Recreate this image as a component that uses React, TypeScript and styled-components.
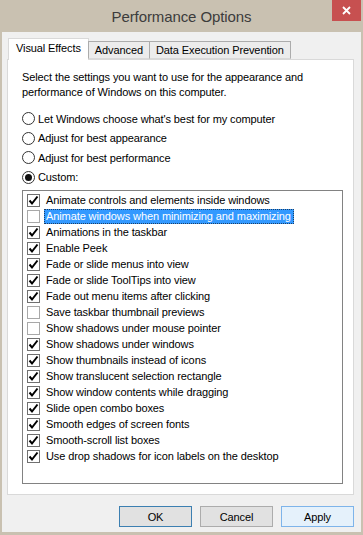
import React from "react";
import styled, { createGlobalStyle } from "styled-components";

const GlobalStyle = createGlobalStyle`
  html, body {
    margin: 0;
    padding: 0;
    background: #c9c1b1;
  }
  body {
    font-family: "Liberation Sans", Arial, sans-serif;
    font-size: 11px;
    letter-spacing: -0.1px;
    color: #000;
  }
`;

const Window = styled.div`
  width: 363px;
  height: 535px;
  display: flex;
  flex-direction: column;
  background: #c9c1b1;
  overflow: hidden;
`;

const TitleBar = styled.div`
  height: 32px;
  display: grid;
  grid-template-columns: 1fr auto 1fr;
  flex-shrink: 0;
`;

const Title = styled.div`
  grid-column: 2;
  align-self: center;
  font-size: 15px;
  letter-spacing: -0.1px;
  color: #3c3c3c;
`;

const CloseButton = styled.div`
  grid-column: 3;
  justify-self: end;
  align-self: start;
  width: 29px;
  height: 21px;
  margin-right: 2px;
  background: #c75050;
  display: flex;
  align-items: center;
  justify-content: center;
`;

const Client = styled.div`
  flex: 1;
  margin: 0 2px 3px;
  background: #f0f0f0;
  display: flex;
  flex-direction: column;
  padding: 6px 7px 0 5px;
`;

const TabStrip = styled.div`
  display: flex;
  align-items: flex-end;
  height: 21px;
  padding-left: 1px;
  position: relative;
  z-index: 1;
`;

const Tab = styled.div<{ $active?: boolean }>`
  box-sizing: border-box;
  height: ${(p) => (p.$active ? "22px" : "18px")};
  margin-bottom: ${(p) => (p.$active ? "-1px" : "0")};
  margin-left: ${(p) => (p.$active ? "0" : "-1px")};
  padding: ${(p) => (p.$active ? "2px 7px 0 7px" : "1px 6px 0 6px")};
  border: 1px solid ${(p) => (p.$active ? "#d9d9d9" : "#acacac")};
  border-bottom: ${(p) => (p.$active ? "none" : "1px solid #d9d9d9")};
  background: ${(p) => (p.$active ? "#ffffff" : "#ececec")};
  white-space: nowrap;
  line-height: 15px;
`;

const Panel = styled.div`
  box-sizing: border-box;
  height: 436px;
  border: 1px solid #d9d9d9;
  background: #fff;
  display: flex;
  flex-direction: column;
  padding: 10px 10px 10px 14px;
`;

const Description = styled.p`
  margin: 0;
  line-height: 15px;
`;

const RadioGroup = styled.div`
  margin-top: 9px;
  display: flex;
  flex-direction: column;
`;

const RadioRow = styled.div`
  height: 19.5px;
  display: flex;
  align-items: center;
  gap: 3px;
`;

const RadioCircle = styled.span<{ $checked?: boolean }>`
  box-sizing: border-box;
  width: 13px;
  height: 13px;
  border-radius: 50%;
  border: 1px solid #333;
  background: #fff;
  display: flex;
  align-items: center;
  justify-content: center;
  &::after {
    content: "";
    width: 7px;
    height: 7px;
    border-radius: 50%;
    background: ${(p) => (p.$checked ? "#111" : "transparent")};
  }
`;

const ListBox = styled.div`
  box-sizing: border-box;
  margin-top: 3px;
  flex: 1;
  border: 1px solid #828282;
  background: #fff;
  padding: 1px 0;
  display: flex;
  flex-direction: column;
`;

const Item = styled.div`
  height: 16px;
  display: flex;
  align-items: center;
  padding-left: 4px;
  gap: 4px;
`;

const CheckBox = styled.span<{ $checked?: boolean }>`
  box-sizing: border-box;
  width: 13px;
  height: 13px;
  border: 1px solid ${(p) => (p.$checked ? "#707070" : "#a8a8a8")};
  background: #fff;
  display: flex;
  align-items: center;
  justify-content: center;
`;

const ItemLabel = styled.span<{ $selected?: boolean }>`
  box-sizing: border-box;
  height: 15px;
  line-height: 13px;
  padding: 0 2px 0 1px;
  white-space: nowrap;
  background: ${(p) => (p.$selected ? "#3399ff" : "transparent")};
  color: ${(p) => (p.$selected ? "#fff" : "#000")};
  border: 1px dotted ${(p) => (p.$selected ? "#1c3f66" : "transparent")};
`;

const ButtonRow = styled.div`
  display: flex;
  justify-content: flex-end;
  gap: 8px;
  margin-top: 11px;
`;

const Button = styled.div<{ $variant?: "default" | "hover" }>`
  box-sizing: border-box;
  width: 73px;
  height: 21px;
  display: flex;
  align-items: center;
  justify-content: center;
  border: 1px solid
    ${(p) =>
      p.$variant === "default"
        ? "#3c7fb1"
        : p.$variant === "hover"
        ? "#7eb4ea"
        : "#acacac"};
  background: ${(p) => (p.$variant === "hover" ? "#e5f1fb" : "#e1e1e1")};
`;

const Check = () => (
  <svg width="11" height="11" viewBox="0 0 11 11">
    <path d="M1.5 5.5 L4 8.5 L9.5 1.5" fill="none" stroke="#000" strokeWidth="2" />
  </svg>
);

const items: [string, boolean][] = [
  ["Animate controls and elements inside windows", true],
  ["Animate windows when minimizing and maximizing", false],
  ["Animations in the taskbar", true],
  ["Enable Peek", true],
  ["Fade or slide menus into view", true],
  ["Fade or slide ToolTips into view", true],
  ["Fade out menu items after clicking", true],
  ["Save taskbar thumbnail previews", false],
  ["Show shadows under mouse pointer", false],
  ["Show shadows under windows", true],
  ["Show thumbnails instead of icons", true],
  ["Show translucent selection rectangle", true],
  ["Show window contents while dragging", true],
  ["Slide open combo boxes", true],
  ["Smooth edges of screen fonts", true],
  ["Smooth-scroll list boxes", true],
  ["Use drop shadows for icon labels on the desktop", true],
];

const radios = [
  "Let Windows choose what's best for my computer",
  "Adjust for best appearance",
  "Adjust for best performance",
  "Custom:",
];

export default function App() {
  return (
    <Window>
      <GlobalStyle />
      <TitleBar>
        <Title>Performance Options</Title>
        <CloseButton>
          <svg width="9" height="9" viewBox="0 0 9 9">
            <path d="M1 1 L8 8 M8 1 L1 8" stroke="#fff" strokeWidth="1.8" />
          </svg>
        </CloseButton>
      </TitleBar>
      <Client>
        <TabStrip>
          <Tab $active>Visual Effects</Tab>
          <Tab>Advanced</Tab>
          <Tab>Data Execution Prevention</Tab>
        </TabStrip>
        <Panel>
          <Description>
            Select the settings you want to use for the appearance and
            performance of Windows on this computer.
          </Description>
          <RadioGroup>
            {radios.map((r, i) => (
              <RadioRow key={r}>
                <RadioCircle $checked={i === 3} />
                <span>{r}</span>
              </RadioRow>
            ))}
          </RadioGroup>
          <ListBox>
            {items.map(([label, checked], i) => (
              <Item key={label}>
                <CheckBox $checked={checked}>{checked && <Check />}</CheckBox>
                <ItemLabel $selected={i === 1}>{label}</ItemLabel>
              </Item>
            ))}
          </ListBox>
        </Panel>
        <ButtonRow>
          <Button $variant="default">OK</Button>
          <Button>Cancel</Button>
          <Button $variant="hover">Apply</Button>
        </ButtonRow>
      </Client>
    </Window>
  );
}
